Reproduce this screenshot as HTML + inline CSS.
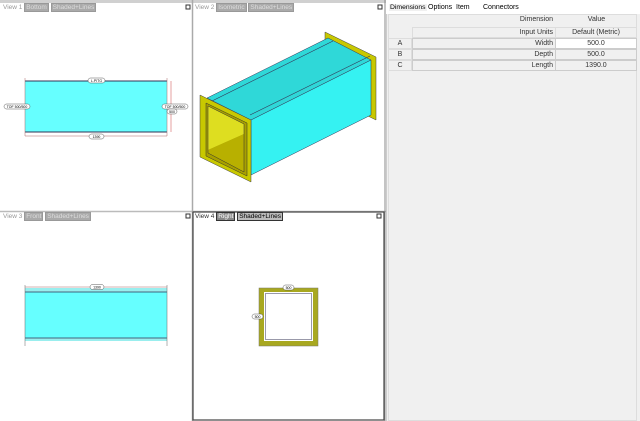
<!DOCTYPE html>
<html><head><style>
body{margin:0;width:640px;height:421px;overflow:hidden;background:#fff;font-family:"Liberation Sans",sans-serif;position:relative}
.a{position:absolute}
.tab{font-size:7px;color:#000}
.vl{font-size:6.5px;color:#999}
.btn{background:#aaa;color:#ddd;padding:0 1px;border:1px solid #999}
.cell{position:absolute;font-size:7px;color:#333;box-sizing:border-box}
</style></head><body>
<svg class="a" style="left:0;top:0" width="386" height="421">
<rect x="0" y="0" width="386" height="421" fill="#fff"/>
<rect x="0" y="0" width="386" height="3" fill="#d0d0d0"/>
<line x1="192.5" y1="0" x2="192.5" y2="421" stroke="#aaa" stroke-width="1.5"/>
<line x1="0" y1="211.5" x2="386" y2="211.5" stroke="#bbb" stroke-width="1.5"/>
<rect x="193" y="212" width="191" height="208" fill="none" stroke="#444" stroke-width="1.2"/>
<line x1="385" y1="0" x2="385" y2="421" stroke="#888"/>
<rect x="186" y="5" width="4" height="4" fill="none" stroke="#333"/>
<rect x="378" y="5" width="4" height="4" fill="none" stroke="#333"/>
<rect x="186" y="214" width="4" height="4" fill="none" stroke="#333"/>
<rect x="377" y="214" width="4" height="4" fill="none" stroke="#333"/>
<!-- view1 -->
<rect x="25" y="81" width="142" height="51" fill="#66ffff"/>
<line x1="25" y1="81" x2="167" y2="81" stroke="#335" stroke-width="1"/>
<line x1="25" y1="132" x2="167" y2="132" stroke="#335" stroke-width="1"/>
<line x1="25" y1="78" x2="25" y2="136" stroke="#a66" stroke-width=".5"/>
<line x1="167" y1="78" x2="167" y2="136" stroke="#a66" stroke-width=".5"/>
<line x1="171" y1="81" x2="171" y2="132" stroke="#c44" stroke-width=".5"/>
<line x1="25" y1="136" x2="167" y2="136" stroke="#a66" stroke-width=".5"/>
<g font-size="3.5" text-anchor="middle" fill="#000">
<rect x="88" y="78" width="17" height="5" rx="2.5" fill="#fff" stroke="#333" stroke-width=".4"/><text x="96.5" y="82">L.PITG</text>
<rect x="4" y="104" width="26" height="5" rx="2.5" fill="#fff" stroke="#333" stroke-width=".4"/><text x="17" y="108">TOF 500/500</text>
<rect x="162" y="104" width="26" height="5" rx="2.5" fill="#fff" stroke="#333" stroke-width=".4"/><text x="175" y="108">TOF 500/500</text>
<rect x="167" y="109" width="10" height="5" rx="2.5" fill="#fff" stroke="#333" stroke-width=".4"/><text x="172" y="113">500</text>
<rect x="89" y="134" width="15" height="5" rx="2.5" fill="#fff" stroke="#333" stroke-width=".4"/><text x="96.5" y="138">1390</text>
</g>
<!-- view2 -->
<polygon points="325,32 376,57 376,120 325,95" fill="#c8c800" stroke="#444" stroke-width=".5"/>
<polygon points="207,98 328,38 371,60 251,120" fill="#2fd8d8" stroke="#335" stroke-width=".5"/>
<line x1="212" y1="101" x2="333" y2="41" stroke="#335" stroke-width=".6"/>
<line x1="250" y1="115" x2="370" y2="56" stroke="#335" stroke-width=".6"/>
<polygon points="251,120 371,60 371,115 251,175" fill="#35f2f2" stroke="#335" stroke-width=".5"/>
<polygon points="200,95 251,120 251,182 200,157" fill="#c8c800" stroke="#444" stroke-width=".5"/>
<polygon points="206,103 247,123 247,176 206,156" fill="#a8a000" stroke="#333" stroke-width=".5"/>
<polygon points="208,106 244,124 244,134 208,150" fill="#dede20"/>
<polygon points="208,150 244,134 244,172 208,153" fill="#b8b000"/>
<polygon points="208,106 244,124 244,172 208,153" fill="none" stroke="#333" stroke-width=".5"/>
<!-- view3 -->
<rect x="25" y="292" width="142" height="46" fill="#66ffff"/>
<rect x="25" y="288" width="142" height="4" fill="#9ee"/>
<rect x="25" y="338" width="142" height="3" fill="#9ee"/>
<line x1="25" y1="292" x2="167" y2="292" stroke="#335" stroke-width=".8"/>
<line x1="25" y1="338" x2="167" y2="338" stroke="#335" stroke-width=".8"/>
<line x1="25" y1="287" x2="167" y2="287" stroke="#a66" stroke-width=".5"/>
<line x1="25" y1="285" x2="25" y2="346" stroke="#666" stroke-width=".5"/>
<line x1="167" y1="285" x2="167" y2="346" stroke="#666" stroke-width=".5"/>
<g font-size="3.5" text-anchor="middle" fill="#000">
<rect x="90" y="284.5" width="14" height="5" rx="2.5" fill="#fff" stroke="#333" stroke-width=".4"/><text x="97" y="288.5">1390</text>
</g>
<!-- view4 -->
<rect x="259" y="288" width="59" height="58" fill="#a8a820" stroke="#776" stroke-width=".5"/>
<rect x="264" y="292" width="49" height="49" fill="#fff"/>
<rect x="265.5" y="293.5" width="46" height="46" fill="none" stroke="#99a" stroke-width="1"/>
<g font-size="3.5" text-anchor="middle" fill="#000">
<rect x="283" y="285" width="11" height="5" rx="2.5" fill="#fff" stroke="#333" stroke-width=".4"/><text x="288.5" y="289">500</text>
<rect x="252" y="314" width="11" height="5" rx="2.5" fill="#fff" stroke="#333" stroke-width=".4"/><text x="257.5" y="318">500</text>
</g>
</svg>
<div class="a vl" style="left:3px;top:4px">View 1 <span class="btn">Bottom</span> <span class="btn">Shaded+Lines</span></div>
<div class="a vl" style="left:195px;top:4px">View 2 <span class="btn">Isometric</span> <span class="btn">Shaded+Lines</span></div>
<div class="a vl" style="left:3px;top:213px">View 3 <span class="btn">Front</span> <span class="btn">Shaded+Lines</span></div>
<div class="a vl" style="left:195px;top:213px;color:#333">View 4 <span class="btn" style="background:#888;color:#fff;border-color:#333">Right</span> <span class="btn" style="background:#bbb;color:#000;border-color:#333">Shaded+Lines</span></div>

<div class="a" style="left:386px;top:0;width:254px;height:421px;background:#f0f0f0;border-left:1px solid #ccc"></div>
<div class="a" style="left:386px;top:0;width:254px;height:14px;background:#fff"></div>
<div class="a tab" style="left:389px;top:4px;background:#f0f0f0;padding:0 1px;font-size:6.8px">Dimensions</div>
<div class="a tab" style="left:428px;top:4px">Options</div>
<div class="a tab" style="left:456px;top:4px">Item</div>
<div class="a tab" style="left:483px;top:4px">Connectors</div>
<div class="a" style="left:388px;top:14px;width:249px;height:407px;background:#f0f0f0;border:1px solid #ddd;box-sizing:border-box"></div>
<div class="cell" style="left:412px;top:16px;width:143px;text-align:right;padding-right:2px">Dimension</div>
<div class="cell" style="left:556px;top:16px;width:81px;text-align:center">Value</div>
<div class="cell" style="left:412px;top:27px;width:144px;height:11px;border:1px solid #ddd;text-align:right;padding-right:2px;line-height:10px">Input Units</div>
<div class="cell" style="left:555px;top:27px;width:82px;height:11px;border:1px solid #ddd;text-align:center;line-height:10px">Default (Metric)</div>
<div class="cell" style="left:388px;top:38px;width:24px;height:11px;border:1px solid #ddd;text-align:center;line-height:10px">A</div>
<div class="cell" style="left:412px;top:38px;width:144px;height:11px;border:1px solid #ccc;text-align:right;padding-right:2px;line-height:10px">Width</div>
<div class="cell" style="left:555px;top:38px;width:82px;height:11px;border:1px solid #ccc;background:#fff;text-align:center;line-height:10px">500.0</div>
<div class="cell" style="left:388px;top:49px;width:24px;height:11px;border:1px solid #ddd;text-align:center;line-height:10px">B</div>
<div class="cell" style="left:412px;top:49px;width:144px;height:11px;border:1px solid #ccc;text-align:right;padding-right:2px;line-height:10px">Depth</div>
<div class="cell" style="left:555px;top:49px;width:82px;height:11px;border:1px solid #ccc;text-align:center;line-height:10px">500.0</div>
<div class="cell" style="left:388px;top:60px;width:24px;height:11px;border:1px solid #ddd;text-align:center;line-height:10px">C</div>
<div class="cell" style="left:412px;top:60px;width:144px;height:11px;border:1px solid #ccc;text-align:right;padding-right:2px;line-height:10px">Length</div>
<div class="cell" style="left:555px;top:60px;width:82px;height:11px;border:1px solid #ccc;text-align:center;line-height:10px">1390.0</div>
</body></html>
